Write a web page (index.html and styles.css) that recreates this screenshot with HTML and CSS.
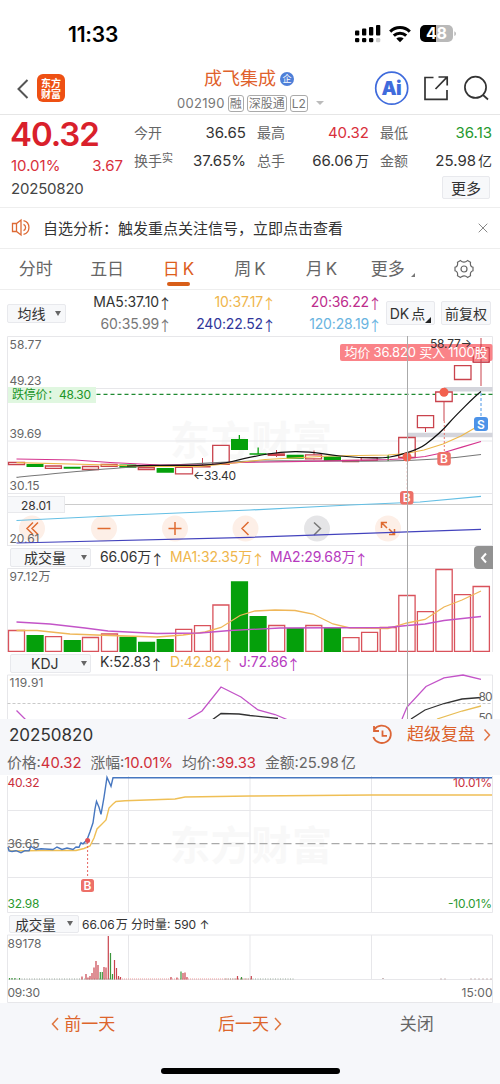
FILE: index.html
```html
<!DOCTYPE html>
<html lang="zh-CN">
<head>
<meta charset="utf-8">
<title>成飞集成 002190</title>
<link rel="stylesheet" href="styles.css">
</head>
<body>
<div class="phone">
  <header class="status">
    <span class="clock">11:33</span>
    <svg class="status-icons" width="106" height="24" viewBox="352 22 106 24">
      <g fill="#000">
        <rect x="355" y="30.500" width="4.300" height="5" rx="1"/><rect x="362" y="28.500" width="4.300" height="7" rx="1"/><rect x="369" y="27" width="4.300" height="8.500" rx="1"/><rect x="376" y="25" width="4.300" height="10.500" rx="1"/>
        <rect x="355" y="38" width="4.300" height="4.300" rx="1.300"/><rect x="362" y="38" width="4.300" height="4.300" rx="1.300"/><rect x="369" y="38" width="4.300" height="4.300" rx="1.300"/>
      </g>
      <rect x="376" y="38" width="4.300" height="4.300" rx="1.300" fill="#ccc"/>
      <g fill="none" stroke="#000" stroke-width="3"><path d="M390.200 31.600a14 14 0 0 1 19.600 0"/><path d="M393.800 35.700a8.900 8.900 0 0 1 12.400 0"/></g>
      <path d="M396.300 38.600a5.400 5.400 0 0 1 7.400 0L400 42.200z"/>
      <path d="M436 25h12a5 5 0 0 1 5 5v7a5 5 0 0 1-5 5h-12z" fill="#b9b9b9"/>
      <path d="M436 25h-11a5 5 0 0 0-5 5v7a5 5 0 0 0 5 5h11z"/>
      <path d="M454.300 31.300q1.700.7 1.700 2.400t-1.700 2.400z" fill="#b9b9b9"/>
      <text x="426" y="39.300" class="battery" textLength="21">48</text>
    </svg>
  </header>

  <nav class="nav">
    <svg class="back" width="14" height="22" viewBox="0 0 14 22"><path d="M11.500 2L2.500 11l9 9" fill="none" stroke="#555" stroke-width="2"/></svg>
    <div class="logo"><span>东方</span><span>财富</span></div>
    <div class="title">
      <div class="name">成飞集成<i class="badge">企</i></div>
      <div class="code"><span class="num">002190</span><b>融</b><b>深股通</b><b>L2</b><i class="caret"></i></div>
    </div>
    <svg class="nav-icons" width="116" height="36" viewBox="374 70 116 36">
      <circle cx="391.700" cy="88.200" r="16" fill="#fff" stroke="#3f6bdc" stroke-width="1.700"/>
      <text x="381.500" y="94.500" class="ai" textLength="20">Ai</text>
      <g fill="none" stroke="#333" stroke-width="1.700"><path d="M433.500 77.500H425v21.800h22V90M438.500 77h8.700v8.500M447 77.200L435.500 89"/><circle cx="475.500" cy="87.300" r="10.600"/><path d="M483 95l5 4.500"/></g>
    </svg>
  </nav>

  <section class="quote">
    <div class="price-col">
      <div class="price">40.32</div>
      <div class="pair red"><span>10.01%</span><span>3.67</span></div>
      <div class="date">20250820</div>
    </div>
    <div class="stat-col">
      <div class="pair"><label>今开</label><span>36.65</span></div>
      <div class="pair"><label>换手<sup>实</sup></label><span>37.65%</span></div>
    </div>
    <div class="stat-col">
      <div class="pair"><label>最高</label><span class="red">40.32</span></div>
      <div class="pair"><label>总手</label><span>66.06<em>万</em></span></div>
    </div>
    <div class="stat-col">
      <div class="pair"><label>最低</label><span class="green">36.13</span></div>
      <div class="pair"><label>金额</label><span>25.98<em>亿</em></span></div>
      <button class="btn more">更多</button>
    </div>
  </section>

  <section class="alert">
    <svg width="22" height="20" viewBox="0 0 22 20" fill="none" stroke="#dd6a35" stroke-width="1.300"><path d="M1.500 5.500h4l4.500-3.500v15l-4.500-3.500h-4zM5.500 5.500v8"/><path d="M12.500 6.300a3.500 3.500 0 0 1 0 6.400M12.500 2.600a7.100 7.100 0 0 1 0 13.800"/></svg>
    <p>自选分析：触发重点关注信号，立即点击查看</p>
    <svg width="10" height="10" viewBox="0 0 10 10"><path d="M.7.7l8.600 8.600M9.300.7L.7 9.300" stroke="#888" stroke-width="1"/></svg>
  </section>

  <nav class="tabs">
    <span>分时</span><span>五日</span><span class="active">日<i>K</i></span><span>周<i>K</i></span><span>月<i>K</i></span><span class="tab-more">更多<i class="corner"></i></span>
    <span><svg width="20" height="20" viewBox="0 0 20 20" fill="none" stroke="#666" stroke-width="1.200"><path d="M6.500 1.600q1.700 1.600 3.500 1.500t3.500-1.500l3 1.700q-.8 4 2.500 5v3.400q-3.300 1-2.500 5l-3 1.700q-1.700-1.600-3.500-1.500t-3.500 1.500l-3-1.700q.8-4-2.500-5V8.300q3.300-1 2.500-5z"/><circle cx="10" cy="10" r="3"/></svg></span>
  </nav>

  <div class="charts">
    <section class="ma">
      <button class="btn drop">均线<i class="tri"></i></button>
      <div class="ma-col c1"><span>MA5:37.10<u>↑</u></span><span class="grey">60:35.99<u>↑</u></span></div>
      <div class="ma-col c2"><span class="yellow">10:37.17<u>↑</u></span><span class="navy">240:22.52<u>↑</u></span></div>
      <div class="ma-col c3"><span class="magenta">20:36.22<u>↑</u></span><span class="sky">120:28.19<u>↑</u></span></div>
      <button class="btn dk">DK<em>点</em><i class="corner"></i></button>
      <button class="btn fq">前复权</button>
    </section>

    <svg class="chart" width="500" height="210" viewBox="0 336 500 210">
      <text class="watermark" x="170" y="455" textLength="162">东方财富</text>
      <g class="grid"><path d="M7.500 546V336.500h485V546M7.500 388.500h485M7.500 441h485M7.500 493.500h485M7.500 545.500h485"/></g>
      <path d="M7.500 504.500h485" stroke="#ccc"/>
      <path d="M444 389.300h48.500M407 435h85.500" stroke="#d4d5dc" stroke-width="4.500"/>
      <g class="controls">
        <g fill="#fdefe7"><circle cx="32" cy="528.500" r="13"/><circle cx="104" cy="528.500" r="13"/><circle cx="175" cy="528.500" r="13"/><circle cx="245.500" cy="528.500" r="13"/><circle cx="388" cy="528.500" r="13"/></g>
        <circle cx="317" cy="528.500" r="13" fill="#e5e5e7"/>
        <g fill="none" stroke="#df6b31" stroke-width="1.500"><path d="M33 522.500l-6 6 6 6M38 522.500l-6 6 6 6M97.500 528.500h13M168.500 528.500h13M175 522v13M248.500 522l-6.500 6.500 6.500 6.500M387 528l-5-5M381.500 528v-5.500h5.500M389 529l5 5M394.500 529v5.500H389"/></g>
        <path d="M314 522.500l6.500 6-6.500 6.500" fill="none" stroke="#777" stroke-width="1.500"/>
      </g>
      <g class="axis">
        <text x="9.500" y="349" textLength="32">58.77</text><text x="9.500" y="385" textLength="32">49.23</text><text x="9.500" y="437.500" textLength="32">39.69</text><text x="9.500" y="490" textLength="30">30.15</text><text x="9.500" y="542.500" textLength="30">20.61</text>
      </g>
      <rect x="8" y="387" width="88" height="16" fill="#e0f7e0"/>
      <text x="12" y="399.300" class="limit" textLength="79">跌停价：48.30</text>
      <path d="M96.500 394.300h396" stroke="#208a32" stroke-width="1.200" stroke-dasharray="4 3"/>
      <g class="candle-up">
        <path d="M202.500 458v8M276.500 450v7M314 450.500v9M425.500 428v4M444 402v19M481 338v48"/>
        <path class="hollow" d="M8.500 462.300h16v2.200h-16zM45.400 466h16v2.300h-16zM82.500 466.500h16v3h-16zM101.100 464.300h16v2h-16zM138.300 467.500h16v2h-16zM175.500 467.300h17v6.500h-17zM194 465.700h16v1.200h-16zM212.700 445.300h16.500v19h-16.500zM268.300 454h16v1.300h-16zM305.500 454.800h16v4h-16zM342.600 460.500h16v1.200h-16zM361.200 457.700h16v2.600h-16zM398.700 437.500h16.500v20h-16.500zM417.400 415.700h16.200v12h-16.200zM435.700 392h16.500v9.500h-16.500zM454.500 365.700h16.500v13.800h-16.500zM473.200 347.700h16v14.500h-16z"/>
      </g>
      <g class="candle-down"><path d="M26.500 464h17v3h-17zM63.700 466.700h17v2h-17zM119.400 464.500h17v3.200h-17zM156.600 468h17.300v4.700h-17.300zM231 439h17v11h-17zM249.500 453.300h17v1.400h-17zM286.600 454.800h17.200v4h-17.200zM323.800 456.500h17.200v4.500h-17.200zM238.700 435h1.300v5h-1.300zM257.500 447.500h1.300v6h-1.300zM387.500 455h1.300v6h-1.300z"/></g>
      <g fill="none" stroke-width="1.200">
        <path stroke="#777" d="M16.500 477.300C70 472 120 467 160 465.500S230 461.500 260 461s90 .5 128 0 60-2 93-6.500"/>
        <path stroke="#d5348e" d="M16.500 459L75 460 110 462.500 160 465h45l35-2.500 80-1.300 70-1.700 17-1 18-2 19-4 18-5.300 19-5.700"/>
        <path stroke="#edb84a" d="M16.500 462.700L90 464.500l65 1.800h45l25-2.300 40-4.500 65-3.500 58-1 18-1.500 18-3.500 19-6 18-8 19-11"/>
        <path stroke="#111" d="M127 466C160 464 205 468 232 461.500S275 452 295 451.700s27 2.600 45 4.300 40 2.500 50 1 28-7 36-13 17-14 23-21 26-27 32-31.500"/>
        <path stroke="#64bfe4" d="M16.500 520.500L130 515l120-5 100-5 70-3 61-5.700"/>
        <path stroke="#4343bd" d="M16.500 543L250 537.300l231-8"/>
      </g>
      <rect x="7.500" y="496.500" width="57" height="16" fill="#f7f8fa" stroke="#e8e9ec"/>
      <text x="21" y="509.500" class="dark" textLength="30">28.01</text>
      <text x="193" y="479.500" class="dark" textLength="43">←33.40</text>
      <path d="M407.300 463v27M444.300 421v30" stroke="#e67770" stroke-dasharray="2 2"/>
      <path d="M481 393v25" stroke="#4c96e5" stroke-dasharray="3 2"/>
      <circle cx="407" cy="457" r="4.500" fill="#f2604e"/><circle cx="444" cy="392.300" r="4.500" fill="#f2604e"/>
      <g class="marks"><rect x="400" y="491" width="13.500" height="13.500" rx="3"/><rect x="437.300" y="452" width="13.500" height="13.500" rx="3"/><rect x="474" y="417" width="14" height="14" rx="3" class="sell"/><text x="402.800" y="502">B</text><text x="440.100" y="463">B</text><text x="477" y="428.500">S</text></g>
      <rect x="340" y="344" width="152.500" height="17" rx="2" fill="#f9757b" fill-opacity=".9"/>
      <path d="M473.200 347.700h16v14.500h-16zM481 344v18" fill="none" stroke="#c93d4c"/>
      <text x="430" y="347.500" class="dark" textLength="42">58.77→</text>
      <text x="344.500" y="357.300" class="tip" textLength="143">均价 36.820 买入 1100股</text>
    </svg>

    <section class="ind">
      <button class="btn drop wide">成交量<i class="tri"></i></button>
      <span class="v1">66.06万<u>↑</u></span><span class="yellow v2">MA1:32.35万<u>↑</u></span><span class="purple">MA2:29.68万<u>↑</u></span>
      <div class="fold"><svg width="8" height="12" viewBox="0 0 8 12"><path d="M6 1.500L2 6l4 4.500" fill="none" stroke="#fff" stroke-width="2"/></svg></div>
    </section>
    <svg class="chart" width="500" height="84" viewBox="0 568 500 84">
      <path class="grid" d="M7.500 652V568.500h485V652"/>
      <text x="9.500" y="580.500" class="axis" textLength="41">97.12万</text>
      <path class="hollow vol" d="M8.500 630.500h16v21h-16zM45.500 636.700h16v14.800h-16zM82.500 637.500h16v14h-16zM101.500 634h16v17.500h-16zM175.700 629.300h16v22.200h-16zM194.500 625.700h16v25.800h-16zM212.900 605h16v46.500h-16zM268.700 625.500h16v26h-16zM305.800 625.500h16v26h-16zM343 637.700h16v13.800h-16zM361.600 632.300h16v19.200h-16zM380.200 627.500h16v24h-16zM398.800 595.500h16.300v56h-16.300zM417.400 611.700h16v39.800h-16zM435.900 569.500h16.300v82h-16.300zM454.500 594.700h16v56.800h-16zM473.100 586.500h16.300v65h-16.300z"/>
      <path class="candle-down" d="M26.500 635h17.200v17H26.500zM63.700 640h17.200v12H63.700zM119.400 636.700h17.200V652h-17.200zM138 641.700h17.200V652H138zM156.600 639h17.200v13h-17.200zM230.900 581.300h17.200V652h-17.200zM249.500 616h17.200v36h-17.200zM286.600 628h17.200v24h-17.200zM323.800 627h17.200v25h-17.200z"/>
      <g fill="none" stroke-width="1.300"><path stroke="#efb759" d="M16.500 630.500L37 630.500 70 634 110 635.500 157 637 183 635 205 632 221 627.500 240 615.500 255 611 275 610 295 610.500 313 614 333 624 350 628 388 628.500 407 623 425 619.500 444 607 462 600 481 591"/><path stroke="#c354c8" d="M16.500 622L50 624 85 628 108 631 157 633.500 200 633 230 630.500 280 628 388 627.500 407 625.500 425 624 444 620.500 481 616.500"/></g>
    </svg>
    <section class="ind">
      <button class="btn drop wide kdj">KDJ<i class="tri"></i></button>
      <span class="v1">K:52.83<u>↑</u></span><span class="yellow v3">D:42.82<u>↑</u></span><span class="purple">J:72.86<u>↑</u></span>
    </section>
    <svg class="chart" width="500" height="45" viewBox="0 674 500 45">
      <path class="grid" d="M7.500 719V675h485v44"/>
      <path d="M7.500 703.500h485" stroke="#c9c9c9" stroke-dasharray="3 2"/>
      <text x="9.500" y="687" class="axis" textLength="34">119.91</text>
      <g fill="none" stroke-width="1.300"><path stroke="#c354c8" d="M16.500 710.500l10 10M187 720l15-9 19-24 20 10 17 13 17 4.500 12 5M402 719l5-12 19-20.500 18-8.700 19-2.800 18 4.300"/><path stroke="#333" d="M212 720l9-6.500 18 .5 11 1.500 28 3M411 719l14-9 19-6.500 18-4.500 19-1.500"/><path stroke="#e8bd55" d="M437 719l25-8 19-5"/></g>
      <text x="478.500" y="701" class="axis" textLength="14">80</text><text x="478.500" y="721.500" class="axis" textLength="14">50</text>
    </svg>
    <div class="crosshair"></div>
  </div>

  <section class="replay">
    <span class="rdate">20250820</span>
    <svg width="22" height="22" viewBox="0 0 22 22" fill="none" stroke="#dc6536" stroke-width="1.800"><path d="M3.300 5.500a9 8.700 0 1 1-1 7.500M3 2v5h5M11.500 6.500v5.300H16"/></svg>
    <span class="super">超级复盘</span>
    <svg width="8" height="14" viewBox="0 0 8 14"><path d="M1.500 1.500L6.500 7l-5 5.500" fill="none" stroke="#e07444" stroke-width="1.500"/></svg>
  </section>
  <section class="info">
    <span>价格:<b>40.32</b></span><span>涨幅:<b>10.01%</b></span><span>均价:<b>39.33</b></span><span>金额:25.98<em>亿</em></span>
  </section>

  <svg class="chart" width="500" height="138" viewBox="0 775 500 138">
    <text class="watermark" x="170" y="860" textLength="162">东方财富</text>
    <path class="grid" d="M7.500 776v136.500h485V776M7.500 810.500h485M7.500 877.500h485M128.500 776v136.500M250 776v136.500M371.500 776v136.500"/>
    <path d="M7.500 843.700h485" stroke="#aaa" stroke-width="1.300" stroke-dasharray="8 4"/>
    <g class="axis intraday"><text x="7.500" y="787.300" class="rise" textLength="32">40.32</text><text x="7.500" y="848" textLength="32">36.65</text><text x="7.500" y="908" class="fall" textLength="32">32.98</text><text x="453" y="787.300" class="rise" textLength="39">10.01%</text><text x="448" y="908" class="fall" textLength="44">-10.01%</text></g>
    <g fill="none" stroke-width="1.400"><path stroke="#efbf55" d="M8 849l3 2 30-.5h35l8-2 6-2.500 4-8 3-9 4-4 5-5 3-12 4-4 3-2.500 9-.8 50-1.700 10-2 65-1 122-1h120"/><path stroke="#4777c0" d="M8 847l1 4 3 .5 4-.8 5 2 4-2 4 .2 2-4.400 5 3 5-.7 12 .7 4-2.500 5 2.500 5-1.500 6 1.500 3-2.500 3 .3 2-4.500 2 1 4-4 3-8 3-9 2-14 1.500-7.500 2.500 6 2 7 3-17 3-20 4 9 2-8.500h379"/></g>
    <path d="M87.600 842v36" stroke="#e6645f" stroke-dasharray="2 2"/><circle cx="87.600" cy="840.500" r="2.500" fill="#df5156"/>
    <g class="marks"><rect x="81" y="879" width="13" height="13" rx="2.500"/><text x="83.500" y="889.700">B</text></g>
  </svg>
  <section class="ind small">
    <button class="btn drop">成交量<i class="tri"></i></button><span>66.06<em>万</em> 分时量: 590 ↑</span>
  </section>
  <svg class="chart" width="500" height="69" viewBox="0 934 500 69">
    <path class="grid" d="M7.500 1002.500V935h485v67.500zM128.500 935v44.500M250 935v44.500M371.500 935v44.500M7.500 979.500h485"/>
    <path d="M120 979h130" stroke="#e99" stroke-dasharray="1 1"/><path d="M9 979h112M225 979h70" stroke="#9a9" stroke-dasharray="1 1.500"/>
    <path d="M382 978.500h2M440 979h8M470 979h22" stroke="#cbb" stroke-dasharray="2 2"/>
    <path d="M82 976.500v3M86 974v5.500M88 977.500v2M90 976v3.500M92 973v6.500M94 967.500v12M96 961v18.500M98 965v14.500M104 967v12.500M106 967.500v12M108.300 936v43.500M114.500 960v19.500M116.500 968v11.500M118.500 976v3.500M120.500 977v2.500M171 977v2.500M177 977.500v2M183 973v6.500M185 972.500v7M187 977v2.500M237.500 976v3.500M251.300 976v3.500" stroke="#c9434d" stroke-width="1.200"/>
    <path d="M100.300 972v7.500M102.300 972v7.500M110.500 953v26.500M112.500 974v5.500M181 971.500v8M241.500 977v2.500M9.500 978v1.500M12 978v1.500M15 978v1.500M19.500 978v1.500" stroke="#3c963c" stroke-width="1.200"/>
    <g class="axis"><text x="7.500" y="947.500" textLength="34">89178</text><text x="7.500" y="996.500" textLength="32.500">09:30</text><text x="461.500" y="996.500" textLength="31">15:00</text></g>
  </svg>

  <footer class="footer">
    <div class="prev"><svg width="8" height="14" viewBox="0 0 8 14"><path d="M7 1L1.500 7 7 13" fill="none" stroke="#df763f" stroke-width="1.500"/></svg>前一天</div>
    <div class="next">后一天<svg width="8" height="14" viewBox="0 0 8 14"><path d="M1 1l5.500 6L1 13" fill="none" stroke="#df763f" stroke-width="1.500"/></svg></div>
    <div class="close">关闭</div>
    <div class="home"></div>
  </footer>
</div>
</body>
</html>
```
FILE: styles.css
```css
* { box-sizing: border-box; }
body { margin: 0; background: #fff; color: #333; font-family: Inter, "Noto Sans CJK SC", sans-serif; font-size: 15px; }
i, em, u { font-style: normal; text-decoration: none; }
.phone { width: 500px; height: 1084px; display: flex; flex-direction: column; overflow: hidden; }
.phone > * { flex-shrink: 0; }
.red { color: #d9303b; }
.green { color: #26992e; }
.yellow { color: #efb64c; }
.navy { color: #30369a; }
.magenta { color: #bd2c8c; }
.sky { color: #69b4df; }
.grey { color: #777; }
.purple { color: #b63abe; }

.status { height: 64px; display: flex; justify-content: space-between; padding: 22px 42px 0 68px; }
.clock { font-size: 21px; line-height: 25px; font-weight: 600; color: #000; letter-spacing: -.2px; }
.battery { font-size: 16px; font-weight: 700; fill: #fff; }

.nav { height: 51px; border-bottom: 1px solid #e6e6e6; display: flex; align-items: flex-start; padding: 0 10px 0 16px; }
.back { margin-top: 14px; }
.logo { width: 28px; height: 28px; margin: 10px 0 0 7px; border-radius: 6px; background: #ee5013; color: #fff; font: 700 10px/11px "Noto Sans CJK SC", sans-serif; display: flex; flex-direction: column; align-items: center; justify-content: center; }
.logo span { height: 11px; overflow: hidden; }
.title { flex: 1; padding: 3px 0 0 112px; }
.name { height: 24px; line-height: 24px; margin-left: 27px; font-size: 18px; color: #df622c; display: flex; align-items: center; }
.badge { width: 14px; height: 14px; margin-left: 4px; border-radius: 50%; background: #4e7fd8; color: #fff; font-size: 9px; line-height: 13px; text-align: center; }
.code { height: 22px; display: flex; align-items: center; color: #777; font-size: 13px; gap: 3px; width: 160px; padding-top: 2px; }
.num { letter-spacing: .3px; }
.code b { height: 17px; line-height: 15px; border: 1px solid #aaa; border-radius: 3px; padding: 0 1px; font-weight: 400; font-size: 12px; white-space: nowrap; }
.caret { margin-left: 5px; border: 4px solid transparent; border-top-color: #bbb; border-bottom: 0; }
.nav-icons { margin-top: 6px; }
.ai { font: 900 19px Inter, sans-serif; fill: #3f6bdc; }

.quote { height: 92px; display: grid; grid-template-columns: repeat(4, 112px); gap: 11px; padding-left: 11px; }
.price-col, .stat-col { display: flex; flex-direction: column; }
.price { height: 38px; line-height: 39px; color: #d9202b; font-size: 33px; font-weight: 600; letter-spacing: -1.1px; margin-left: -1px; }
.pair { display: flex; justify-content: space-between; align-items: center; }
.price-col .pair { height: 24px; }
.date { height: 24px; line-height: 24px; color: #444; letter-spacing: -.2px; }
.stat-col { padding-top: 4px; }
.stat-col .pair { height: 28px; line-height: 28px; white-space: nowrap; }
.pair label { color: #666; font-size: 14px; }
.pair sup { font-size: 11px; line-height: 0; vertical-align: 4px; }
.pair em { font-size: 14px; margin-left: 2px; }
.btn { border: 1px solid #e8e9ed; background: #f7f8fa; border-radius: 2px; padding: 0; margin: 0; font: inherit; color: #333; display: flex; align-items: center; justify-content: center; white-space: nowrap; }
.more { width: 48px; height: 23px; margin: 1px 0 0 62px; padding-bottom: 1px; font-size: 15px; }

.alert { height: 42px; border-top: 1px solid #eee; border-bottom: 1px solid #eee; display: flex; align-items: center; padding: 0 12px 0 11px; }
.alert p { margin: -2px 0 0 10px; flex: 1; font-size: 15px; white-space: nowrap; }
.tabs { height: 41px; border-bottom: 1px solid #eee; display: grid; grid-template-columns: repeat(7, 1fr); color: #666; font-size: 17px; line-height: 38px; }
.tabs span { position: relative; display: flex; align-items: center; justify-content: center; padding-bottom: 1px; }
.tabs i { margin-left: 3px; }
.tabs .active { color: #dd5e1c; }
.active::after { content: ""; position: absolute; bottom: 3px; width: 23px; height: 4px; border-radius: 2px; background: #d85e18; }
.corner { width: 0; height: 0; border: 2.500px solid #777; border-top-color: transparent; border-left-color: transparent; align-self: flex-end; }
.tabs .corner { margin: 0 0 11px 6px; }

.charts { position: relative; }
.ma { height: 46px; display: flex; align-items: center; padding-left: 7px; font-size: 14px; }
.drop { width: 59px; height: 19px; font-size: 14px; gap: 9px; padding-left: 5px; }
.tri { border: 3px solid transparent; border-top: 5px solid #666; border-bottom: 0; }
.ma-col { height: 45px; display: flex; flex-direction: column; align-items: flex-end; line-height: 22px; letter-spacing: -.15px; white-space: nowrap; }
.ma-col u, .ind u { display: inline-block; width: 8px; height: 18px; line-height: 18px; vertical-align: middle; text-indent: -3px; margin-left: 2px; font-family: "Noto Sans CJK SC", sans-serif; }
.c1 { width: 103px; }
.c2 { width: 104px; }
.c3 { width: 106px; }
.dk { width: 49px; height: 24px; margin-left: 7px; }
.dk em { margin-left: 2px; }
.dk .corner { border-width: 3px; border-right-color: #222; border-bottom-color: #222; margin-bottom: 1px; }
.fq { width: 50px; height: 24px; margin-left: 6px; }
.chart { display: block; }
.grid, .grid path { fill: none; stroke: #e7e7ea; stroke-width: 1; }
.axis { font-size: 12px; fill: #666; }
.rise { fill: #c92e3b; }
.fall { fill: #2a9930; }
.watermark { font: 700 40px "Noto Sans CJK SC", sans-serif; fill: #f8f8f8; }
.limit { fill: #209528; font-size: 12px; }
.dark { fill: #333; font-size: 12px; }
.tip { fill: #fff; font-size: 13px; }
.candle-up path { fill: #fff; stroke: #c9434d; }
.hollow { fill: #fff; stroke: #d9525b; stroke-width: 1.300; }
.candle-down { fill: #05a00b; }
.marks rect { fill: #ed7068; }
.marks .sell { fill: #4d93e8; }
.marks text { fill: #fff; font-size: 12px; font-weight: 600; }
.crosshair { position: absolute; left: 407px; top: 46px; width: 1px; height: 383px; background: #aaa; }

.ind { height: 22px; display: flex; align-items: center; padding-left: 10px; font-size: 14px; letter-spacing: -.15px; position: relative; white-space: nowrap; }
.drop.wide { width: 81px; justify-content: flex-start; padding-left: 13px; }
.drop.kdj { padding-left: 20px; }
.wide .tri { margin-left: auto; margin-right: 3px; }
.v1 { width: 70px; margin-left: 9px; }
.v2 { width: 100px; }
.v3 { width: 69px; }
.fold { position: absolute; right: 7px; top: 0; width: 19px; height: 23px; border-radius: 4px 0 0 4px; background: #929292; display: flex; align-items: center; justify-content: center; }

.replay { height: 31px; display: flex; align-items: center; background: #f6f7fa; padding: 0 9px; }
.rdate { flex: 1; font-size: 17px; }
.super { color: #dc612b; font-size: 17px; line-height: 28px; margin: -2px 8px 0 14px; }
.info { height: 25px; display: flex; align-items: center; gap: 9px; background: #f6f7fa; padding: 0 7px 2px; font-size: 14.800px; color: #666; white-space: nowrap; }
.info b { font-weight: 400; color: #d02e39; }
.info em { margin-left: 2px; }
.small { height: 21px; font-size: 12px; letter-spacing: 0; padding-left: 9px; }
.small .drop { width: 70px; height: 18px; font-size: 13.500px; gap: 11px; padding-left: 0; }
.small span { margin-left: 3px; }
.small em { margin-left: 1px; }

.footer { height: 81px; background: #f6f7fa; display: grid; grid-template-columns: 1fr 1fr 1fr; justify-items: center; color: #dd652b; font-size: 17px; line-height: 42px; position: relative; }
.footer > div:not(.home) { display: flex; align-items: center; height: 42px; gap: 5px; }
.footer .close { color: #666; }
.home { position: absolute; left: 161px; bottom: 10px; width: 179px; height: 6px; border-radius: 3px; background: #000; }
```
